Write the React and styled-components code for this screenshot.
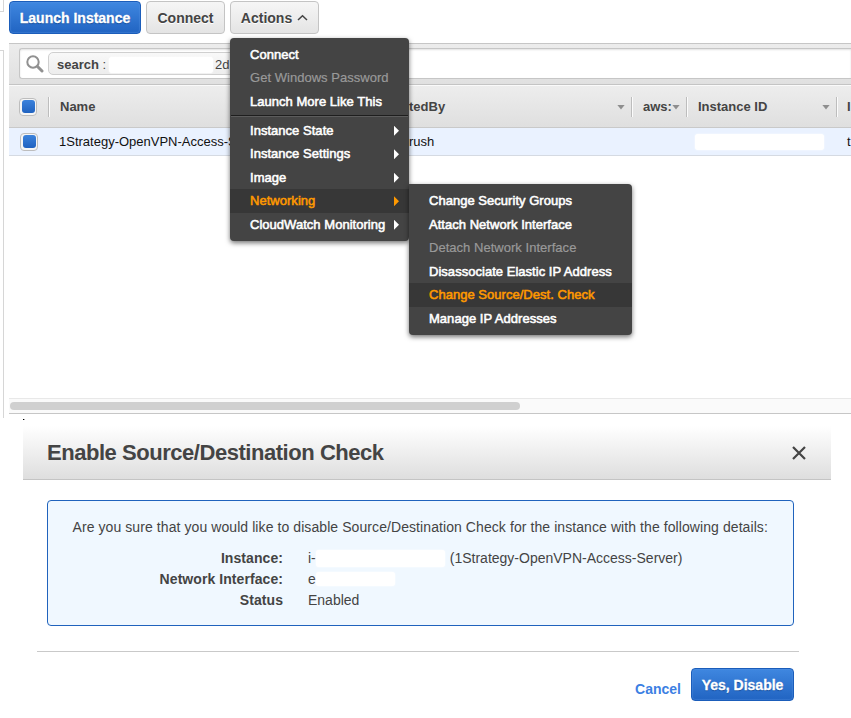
import React from "react";
import styled, { createGlobalStyle, css } from "styled-components";

const GlobalStyle = createGlobalStyle`
  * { box-sizing: border-box; }
  body {
    margin: 0;
    background: #fff;
    color: #444;
    font: 14px/20px "Liberation Sans", Arial, sans-serif;
    overflow: hidden;
  }
`;

const Page = styled.main`
  position: relative;
  width: 851px;
  height: 718px;
  overflow: hidden;
  white-space: nowrap;
`;

const Console = styled.section`
  display: flex;
  height: 420px;
`;

const Gutter = styled.div`
  display: flex;
  flex-direction: column;
  gap: 38px;
  flex: 0 0 9px;
`;

const GutterPanel = styled.div`
  width: 4px;
  height: ${(p) => p.$height}px;
  border: solid #d6d6d6;
  border-width: ${(p) => (p.$end ? "0 1px 1px 0" : "1px 1px 0 0")};
`;

const Main = styled.div`
  flex: 1;
  min-width: 0;
`;

const Toolbar = styled.div`
  display: flex;
  gap: 5px;
  height: 43px;
  padding-top: 1px;
`;

const Button = styled.button`
  display: flex;
  align-items: center;
  justify-content: center;
  gap: 5px;
  flex: none;
  width: ${(p) => p.$width}px;
  height: 33px;
  padding: 1px 0 0;
  border: 1px solid #c4c4c4;
  border-radius: 4px;
  background: linear-gradient(#f6f6f6, #e4e4e4);
  color: #444;
  font: bold 14px/20px "Liberation Sans", Arial, sans-serif;
  text-shadow: 0 1px 0 #fff;
  ${(p) =>
    p.$primary &&
    css`
      border-color: #1b5dba;
      background: linear-gradient(#3f87e0, #2164c2);
      box-shadow: inset 0 0 1px 1px rgba(90, 150, 225, 0.35);
      color: #fff;
      text-shadow: 0 1px 1px #164a94;
      -webkit-text-stroke: 0.3px #fff;
    `}
`;

const Panel = styled.div`
  border: solid #c6c6c6;
  border-width: 1px 0;
`;

const SearchBar = styled.div`
  height: 41px;
  padding: 4px 0 0 10px;
  background: linear-gradient(#ececec, #e0e0e0);
  border-bottom: 1px solid #c4c4c4;
`;

const SearchField = styled.div`
  display: flex;
  align-items: center;
  height: 31px;
  padding-left: 6px;
  border: 1px solid #c6c6c6;
  border-right: 0;
  border-radius: 3px 0 0 3px;
  background: #fff;
  box-shadow: inset 0 1px 2px rgba(0, 0, 0, 0.12);
`;

const SearchChip = styled.div`
  display: flex;
  align-items: center;
  width: 220px;
  height: 23px;
  margin-left: 4px;
  padding: 2px 0 0 8px;
  border: 1px solid #cfcfcf;
  border-radius: 5px;
  background: linear-gradient(#f8f8f8, #ededed);
  font-size: 13px;
`;

const ChipLabel = styled.span`
  width: 52px;
`;

const Redaction = styled.span`
  flex: none;
  width: ${(p) => p.$width}px;
  height: ${(p) => p.$height}px;
  margin: ${(p) => p.$margin || 0};
  border-radius: 3px;
  background: #fff;
  box-shadow: 0 0 2px #fff;
`;

const HeaderRow = styled.div`
  display: flex;
  align-items: center;
  height: 43px;
  border-top: 1px solid #fafafa;
  border-bottom: 1px solid #c9c9c9;
  background: linear-gradient(#ededed, #dfdfdf);
  font-size: 13px;
  font-weight: bold;
`;

const HeaderCell = styled.div`
  display: flex;
  align-items: center;
  justify-content: space-between;
  flex: none;
  width: ${(p) => p.$width}px;
  height: 20px;
  padding: 0 6px 0 ${(p) => p.$pad}px;
  ${(p) =>
    p.$line &&
    css`
      border-left: 1px solid #bdbdbd;
      box-shadow: inset 1px 0 0 #fbfbfb;
    `}
`;

const Caret = styled.span`
  flex: none;
  width: 8px;
  height: 5px;
  margin-top: 1px;
  background: #8e8e8e;
  clip-path: polygon(0 0, 100% 0, 50% 100%);
`;

const DataRow = styled.div`
  display: flex;
  align-items: center;
  height: 28px;
  border-bottom: 1px solid #d5dae2;
  background: #eaf2ff;
  color: #111;
  font-size: 13px;
`;

const DataCell = styled.div`
  flex: none;
  display: flex;
  align-items: center;
  width: ${(p) => p.$width}px;
  padding-left: ${(p) => p.$pad}px;
`;

const Check = styled.span`
  display: grid;
  place-items: center;
  flex: none;
  width: 18px;
  height: 18px;
  border: 1px solid #bdbdbd;
  border-radius: 4px;
  background: #f5f5f5;

  &::before {
    content: "";
    width: 13px;
    height: 13px;
    border-radius: 3px;
    background: linear-gradient(#3b82dc, #2062c0);
  }
`;

const TableSpace = styled.div`
  height: 242px;
`;

const ScrollTrack = styled.div`
  height: 15px;
  padding: 3px 0 0 1px;
  border-top: 1px solid #e8e8e8;
  background: #fafafa;
`;

const ScrollThumb = styled.div`
  width: 510px;
  height: 8px;
  border-radius: 4px;
  background: #d0d0d0;
`;

const Menu = styled.ul`
  position: absolute;
  left: ${(p) => p.$left}px;
  top: ${(p) => p.$top}px;
  width: ${(p) => p.$width}px;
  margin: 0;
  padding: 5px 0;
  border-radius: ${(p) => p.$radius};
  background: #444;
  box-shadow: 0 2px 5px rgba(0, 0, 0, 0.55);
  list-style: none;
`;

const MenuItem = styled.li`
  display: flex;
  align-items: center;
  justify-content: space-between;
  height: 23.5px;
  padding: 1px 10px 0 20px;
  color: ${(p) => (p.$active ? "#ff9900" : p.$disabled ? "#999" : "#fff")};
  background: ${(p) => (p.$active ? "#373737" : "transparent")};
  font-size: 13px;
  letter-spacing: 0.03px;
  -webkit-text-stroke: ${(p) => (p.$disabled ? 0.2 : 0.55)}px currentColor;
`;

const Separator = styled.li`
  height: 2px;
  margin: 2px 1px 1.5px;
  border-top: 1px solid #1e1e1e;
  background: #5c5c5c;
`;

const MenuArrow = styled.span`
  width: 5px;
  height: 10px;
  background: currentColor;
  clip-path: polygon(0 0, 100% 50%, 0 100%);
`;

const Dialog = styled.section`
  width: 808px;
  margin-left: 23px;
`;

const DialogHeader = styled.header`
  position: relative;
  display: flex;
  align-items: center;
  justify-content: space-between;
  height: 60px;
  padding: 6px 25px 0 24px;
  border-bottom: 1px solid #c4c4c4;
  background: linear-gradient(#fff 10%, #dedede);

  /* dark corner pixel above the header's left edge */
  &::before {
    content: "";
    position: absolute;
    left: 0;
    top: -1px;
    width: 2px;
    height: 1px;
    background: linear-gradient(90deg, #000 50%, #aaa 50%);
  }
`;

const Title = styled.h1`
  margin: 0;
  font-size: 22px;
  line-height: 26px;
  letter-spacing: -0.46px;
`;

const InfoBox = styled.div`
  width: 747px;
  height: 126px;
  margin: 20px 0 0 24px;
  padding: 16px 24px 0;
  border: 1px solid #2063bd;
  border-radius: 4px;
  background: #f0f8ff;
`;

const Question = styled.p`
  margin: 0 0 11px 0.5px;
  letter-spacing: 0.08px;
`;

const Details = styled.dl`
  display: grid;
  grid-template-columns: 211px 1fr;
  grid-auto-rows: 21px;
  column-gap: 25px;
  margin: 0;
`;

const Term = styled.dt`
  font-weight: bold;
  text-align: right;
  letter-spacing: 0.07px;
`;

const Value = styled.dd`
  display: flex;
  align-items: center;
  height: 20px;
  margin: 0;
`;

const DialogFooter = styled.footer`
  display: flex;
  align-items: flex-start;
  justify-content: flex-end;
  gap: 10px;
  width: 762px;
  margin: 25px 0 0 14px;
  padding: 16px 5px 0 0;
  border-top: 1px solid #c9c9c9;
`;

const CancelLink = styled.a`
  margin-top: 11px;
  color: #3c7fe3;
  font-weight: bold;
`;

const SearchIcon = () => (
  <svg width="18" height="18" viewBox="0 0 18 18" fill="none" stroke="#919191">
    <circle cx="7" cy="7" r="5.7" strokeWidth="2" />
    <path d="M11.5 11.5L16 16" strokeWidth="3" strokeLinecap="round" />
  </svg>
);

const ChevronUp = () => (
  <svg width="11" height="8" viewBox="0 0 11 8" fill="none" stroke="#444" strokeWidth="1.5">
    <path d="M1 6L5.5 1.7L10 6" />
  </svg>
);

const CloseIcon = () => (
  <svg width="14" height="14" viewBox="0 0 14 14" fill="none" stroke="#444" strokeWidth="2.2">
    <path d="M1 1L13 13M13 1L1 13" />
  </svg>
);

const actionItems = [
  { label: "Connect" },
  { label: "Get Windows Password", disabled: true },
  { label: "Launch More Like This" },
  { separator: true },
  { label: "Instance State", sub: true },
  { label: "Instance Settings", sub: true },
  { label: "Image", sub: true },
  { label: "Networking", sub: true, active: true },
  { label: "CloudWatch Monitoring", sub: true },
];

const networkItems = [
  { label: "Change Security Groups" },
  { label: "Attach Network Interface" },
  { label: "Detach Network Interface", disabled: true },
  { label: "Disassociate Elastic IP Address" },
  { label: "Change Source/Dest. Check", active: true },
  { label: "Manage IP Addresses" },
];

const renderItem = (item, i) =>
  item.separator ? (
    <Separator key={i} />
  ) : (
    <MenuItem key={i} $active={item.active} $disabled={item.disabled}>
      <span>{item.label}</span>
      {item.sub && <MenuArrow />}
    </MenuItem>
  );

export default function App() {
  return (
    <Page>
      <GlobalStyle />
      <Console>
        <Gutter>
          <GutterPanel $height={12} $end />
          <GutterPanel $height={368} />
        </Gutter>
        <Main>
          <Toolbar>
            <Button $primary $width={132}>Launch Instance</Button>
            <Button $width={79}>Connect</Button>
            <Button $width={89}>
              Actions <ChevronUp />
            </Button>
          </Toolbar>
          <Panel>
            <SearchBar>
              <SearchField>
                <SearchIcon />
                <SearchChip>
                  <ChipLabel><b>search</b> :</ChipLabel>
                  <Redaction $width={104} $height={16} $margin="0 2px 0 0" />
                  2d
                </SearchChip>
              </SearchField>
            </SearchBar>
            <HeaderRow>
              <HeaderCell $width={39} $pad={10}><Check /></HeaderCell>
              <HeaderCell $width={352} $pad={11} $line>Name</HeaderCell>
              <HeaderCell $width={231} $pad={9}>tedBy<Caret /></HeaderCell>
              <HeaderCell $width={55} $pad={11} $line>aws:<Caret /></HeaderCell>
              <HeaderCell $width={150} $pad={11} $line>Instance ID<Caret /></HeaderCell>
              <HeaderCell $width={15} $pad={10} $line>I</HeaderCell>
            </HeaderRow>
            <DataRow>
              <DataCell $width={50} $pad={11}><Check /></DataCell>
              <DataCell $width={172}>1Strategy-OpenVPN-Access-S</DataCell>
              <DataCell $width={455} $pad={178}>rush</DataCell>
              <DataCell $width={161} $pad={9}>
                <Redaction $width={129} $height={16} />
              </DataCell>
              <DataCell $width={5}>t</DataCell>
            </DataRow>
            <TableSpace />
            <ScrollTrack><ScrollThumb /></ScrollTrack>
          </Panel>
        </Main>
      </Console>

      <Dialog>
        <DialogHeader>
          <Title>Enable Source/Destination Check</Title>
          <CloseIcon />
        </DialogHeader>
        <InfoBox>
          <Question>
            Are you sure that you would like to disable Source/Destination Check for the instance with the following details:
          </Question>
          <Details>
            <Term>Instance:</Term>
            <Value>
              i-
              <Redaction $width={129} $height={17} $margin="0 5px 0 0" />
              (1Strategy-OpenVPN-Access-Server)
            </Value>
            <Term>Network Interface:</Term>
            <Value>
              e<Redaction $width={79} $height={14} />
            </Value>
            <Term>Status</Term>
            <Value>Enabled</Value>
          </Details>
        </InfoBox>
        <DialogFooter>
          <CancelLink>Cancel</CancelLink>
          <Button $primary $width={103}>Yes, Disable</Button>
        </DialogFooter>
      </Dialog>

      <Menu $left={230} $top={37.5} $width={179} $radius="4px">
        {actionItems.map(renderItem)}
      </Menu>
      <Menu $left={409} $top={184} $width={223} $radius="0 4px 4px 4px">
        {networkItems.map(renderItem)}
      </Menu>
    </Page>
  );
}
